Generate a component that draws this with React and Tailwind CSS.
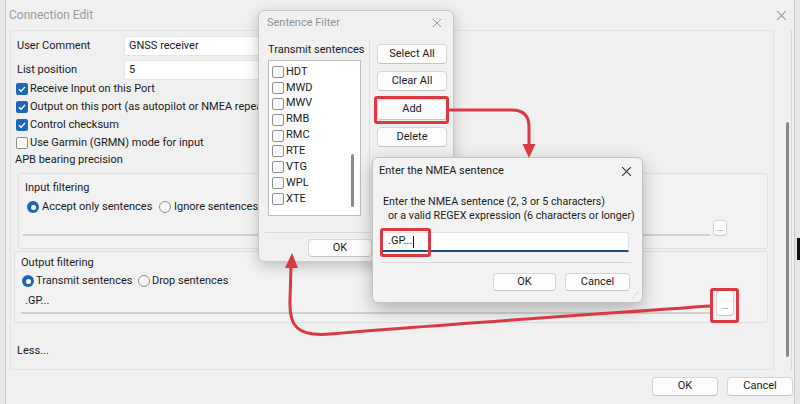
import React from "react";

const RED = "#d93a41";

function CloseX({ color = "#555", size = 10 }) {
  return (
    <svg width={size} height={size} viewBox="0 0 10 10">
      <path d="M1 1 L9 9 M9 1 L1 9" stroke={color} strokeWidth="1" fill="none" />
    </svg>
  );
}

function Check({ checked }) {
  if (!checked) {
    return <span className="w-[12px] h-[12px] rounded-[2px] border border-[#8d8d8d] bg-[#fbfbfb] shrink-0" />;
  }
  return (
    <span className="w-[12px] h-[12px] rounded-[2px] bg-[#1f67b5] flex items-center justify-center shrink-0">
      <svg width="10" height="10" viewBox="0 0 10 10">
        <path d="M2 5.3 L4.1 7.3 L8 2.9" stroke="#fff" strokeWidth="1.4" fill="none" />
      </svg>
    </span>
  );
}

function Radio({ on }) {
  if (on) {
    return (
      <span className="w-[12px] h-[12px] rounded-full bg-[#1f67b5] flex items-center justify-center shrink-0">
        <span className="w-[5px] h-[5px] rounded-full bg-white" />
      </span>
    );
  }
  return <span className="w-[12px] h-[12px] rounded-full border border-[#8d8d8d] bg-[#f7f7f7] shrink-0" />;
}

function Btn({ children, className = "" }) {
  return (
    <div
      className={
        "flex items-center justify-center bg-[#fdfdfd] border border-[#d6d6d6] border-b-[#c4c4c4] rounded-[4px] text-[#1b1b1b] whitespace-nowrap " +
        className
      }
    >
      {children}
    </div>
  );
}

function CheckRow({ checked, label }) {
  return (
    <div className="h-[18px] flex items-center gap-[2px] pl-[5px] whitespace-nowrap">
      <Check checked={checked} />
      <span>{label}</span>
    </div>
  );
}

const sentences = ["HDT", "MWD", "MWV", "RMB", "RMC", "RTE", "VTG", "WPL", "XTE"];

function SentenceFilter() {
  return (
    <div className="absolute left-[258px] top-[10px] w-[196px] h-[252px] bg-[#f0f0f0] border border-[#c9c9c9] rounded-[6px] shadow-[0_4px_14px_rgba(0,0,0,0.22)] flex flex-col whitespace-nowrap">
      <div className="h-[24px] flex items-center justify-between pl-[8px] pr-[11px] text-[#929292]">
        <span>Sentence Filter</span>
        <CloseX color="#9a9a9a" />
      </div>
      <div className="flex pl-[9px] pt-[6px]">
        <div className="w-[93px]">
          <div className="h-[19px] flex items-center">Transmit sentences</div>
          <div className="relative h-[156px] bg-white border border-[#bdbdbd] pt-[3px] pl-[3px]">
            {sentences.map((s) => (
              <div key={s} className="h-[15.9px] flex items-center gap-[2px]">
                <Check checked={false} />
                <span>{s}</span>
              </div>
            ))}
            <div className="absolute left-[82px] top-[93px] w-[3px] h-[53px] rounded-full bg-[#8a8a8a]" />
          </div>
        </div>
        <div className="ml-[8px] flex-1 border-l border-[#dedede] pl-[7px] pt-[3px] flex flex-col gap-[7px]">
          <Btn className="w-[70px] h-[20px]">Select All</Btn>
          <Btn className="w-[70px] h-[20px]">Clear All</Btn>
          <Btn className="w-[70px] h-[21px] mt-[1px]">Add</Btn>
          <Btn className="w-[70px] h-[20px]">Delete</Btn>
        </div>
      </div>
      <div className="mt-[16px] mx-[6px] border-t border-[#dadada]" />
      <div className="pl-[49px] pt-[6px]">
        <Btn className="w-[64px] h-[18px]">OK</Btn>
      </div>
    </div>
  );
}

function NmeaDialog() {
  return (
    <div className="absolute left-[372px] top-[157px] w-[271px] h-[146px] bg-[#f3f3f3] border border-[#c4c4c4] rounded-[6px] shadow-[0_6px_18px_rgba(0,0,0,0.28)] flex flex-col whitespace-nowrap">
      <div className="h-[27px] flex items-center justify-between pl-[6px] pr-[10px] text-[#1b1b1b]">
        <span>Enter the NMEA sentence</span>
        <CloseX color="#333" size={11} />
      </div>
      <div className="pl-[10px] pt-[10px] leading-[14px] text-[10.7px]">
        <div>Enter the NMEA sentence (2, 3 or 5 characters)</div>
        <div className="pl-[5px]">or a valid REGEX expression (6 characters or longer)</div>
      </div>
      <div className="ml-[8px] mt-[9px] w-[248px] h-[20px] bg-white border border-[#e2e2e2] border-b-[2px] border-b-[#1c4f8c] rounded-t-[3px] flex items-center pl-[6px]">
        <span>.GP...</span>
        <span className="ml-[1px] w-[1px] h-[12px] bg-[#111]" />
      </div>
      <div className="ml-[8px] mt-[10px] w-[250px] border-t border-[#d5d5d5]" />
      <div className="flex justify-end gap-[9px] pr-[12px] pt-[10px]">
        <Btn className="w-[63px] h-[18px]">OK</Btn>
        <Btn className="w-[65px] h-[18px]">Cancel</Btn>
      </div>
      <div className="absolute right-[3px] bottom-[3px] text-[7px] leading-[7px] text-[#9a9a9a]">⋰</div>
    </div>
  );
}

function Highlights() {
  return (
    <>
      <div className="absolute left-[374px] top-[96px] w-[75px] h-[28px] border-[3px] border-[#d93a41] rounded-[3px]" />
      <div className="absolute left-[380px] top-[228px] w-[51px] h-[29px] border-[3px] border-[#d93a41] rounded-[3px]" />
      <div className="absolute left-[710px] top-[288px] w-[29px] h-[35px] border-[3px] border-[#d93a41] rounded-[3px]" />
      <svg className="absolute left-0 top-0" width="800" height="404" viewBox="0 0 800 404">
        <path d="M449 110 L512 110 Q529 110 529 127 L529 146" stroke={RED} strokeWidth="3" fill="none" />
        <polygon points="522.5,144 535.5,144 529,158" fill={RED} />
        <path
          d="M710 306 C600 314 420 326 330 334 C296 337 289 325 290 300 L291 266"
          stroke={RED}
          strokeWidth="3"
          fill="none"
        />
        <polygon points="285,268 298,268 292,253" fill={RED} />
      </svg>
    </>
  );
}

export default function App() {
  return (
    <div className="relative w-[800px] h-[404px] overflow-hidden bg-[#e6e6e6] font-['Roboto',sans-serif] text-[11px] text-[#1b1b1b] whitespace-nowrap">
      <div className="absolute left-[797px] top-[238px] w-[3px] h-[22px] bg-[#111]" />
      <div className="ml-[5px] w-[790px] h-[404px] bg-[#f0f0f0] border-l border-r border-[#cbcbcb] flex flex-col">
        {/* title bar */}
        <div className="h-[30px] flex items-center justify-between pl-[3px] pr-[7px] text-[#9a9a9a] text-[12px]">
          <span>Connection Edit</span>
          <CloseX color="#9a9a9a" size={11} />
        </div>

        {/* body */}
        <div className="flex h-[340px]">
          <div className="ml-[4px] w-[764px] h-[340px] border border-[#e1e1e1] rounded-[3px] bg-[#f0f0f0] flex flex-col">
            <div className="mt-[5px] h-[20px] flex items-center">
              <span className="w-[113px] pl-[6px]">User Comment</span>
              <div className="w-[200px] h-[20px] bg-white border border-[#e4e4e4] rounded-[2px] flex items-center pl-[4px]">
                GNSS receiver
              </div>
            </div>
            <div className="mt-[4px] h-[20px] flex items-center">
              <span className="w-[113px] pl-[6px]">List position</span>
              <div className="w-[200px] h-[20px] bg-white border border-[#e4e4e4] rounded-[2px] flex items-center pl-[4px]">
                5
              </div>
            </div>
            <CheckRow checked label="Receive Input on this Port" />
            <CheckRow checked label="Output on this port (as autopilot or NMEA repeater)" />
            <CheckRow checked label="Control checksum" />
            <CheckRow checked={false} label="Use Garmin (GRMN) mode for input" />
            <div className="h-[16px] flex items-center pl-[4px]">APB bearing precision</div>

            {/* input filtering */}
            <div className="mt-[5px] ml-[7px] w-[750px] h-[76px] border border-[#e0e0e0] rounded-[3px] bg-[#f2f2f2] flex flex-col">
              <div className="pl-[6px] pt-[6px] h-[21px]">Input filtering</div>
              <div className="h-[18px] mt-[3px] flex items-center pl-[8px] gap-[3px]">
                <Radio on />
                <span className="w-[114px]">Accept only sentences</span>
                <Radio on={false} />
                <span>Ignore sentences</span>
              </div>
              <div className="flex items-end pl-[4px] mt-[4px]">
                <div className="w-[687px] h-[16px] border-b-[2px] border-[#cfcfcf]" />
                <Btn className="ml-[3px] w-[14px] h-[16px] text-[8px] leading-[8px] items-end pb-[2px]">...</Btn>
              </div>
            </div>

            {/* output filtering */}
            <div className="mt-[2px] ml-[3px] w-[754px] h-[72px] border border-[#e0e0e0] rounded-[3px] bg-[#f2f2f2] flex flex-col">
              <div className="pl-[6px] pt-[3px] h-[17px]">Output filtering</div>
              <div className="h-[18px] mt-[3px] flex items-center pl-[7px] gap-[2px]">
                <Radio on />
                <span className="w-[100px]">Transmit sentences</span>
                <Radio on={false} />
                <span>Drop sentences</span>
              </div>
              <div className="flex items-end pl-[6px]">
                <div className="w-[690px] h-[24px] border-b-[2px] border-[#cfcfcf] flex items-end pb-[3px] pl-[4px]">
                  .GP...
                </div>
                <Btn className="ml-[5px] w-[18px] h-[26px] text-[8px] leading-[8px] items-end pb-[4px] mb-[-2px]">...</Btn>
              </div>
            </div>

            <div className="mt-[20px] pl-[6px]">Less...</div>
          </div>
          <div className="flex-1 relative">
            <div className="absolute left-[12px] top-[92px] w-[3px] h-[235px] rounded-full bg-[#8a8a8a]" />
            <div className="absolute right-[2px] top-0 bottom-0 w-px bg-[#d9d9d9]" />
          </div>
        </div>

        {/* footer */}
        <div className="flex-1 flex items-center justify-end gap-[9px] pr-[1px] pb-[2px]">
          <Btn className="w-[66px] h-[19px]">OK</Btn>
          <Btn className="w-[66px] h-[19px]">Cancel</Btn>
        </div>
      </div>

      <SentenceFilter />
      <NmeaDialog />
      <Highlights />
    </div>
  );
}
